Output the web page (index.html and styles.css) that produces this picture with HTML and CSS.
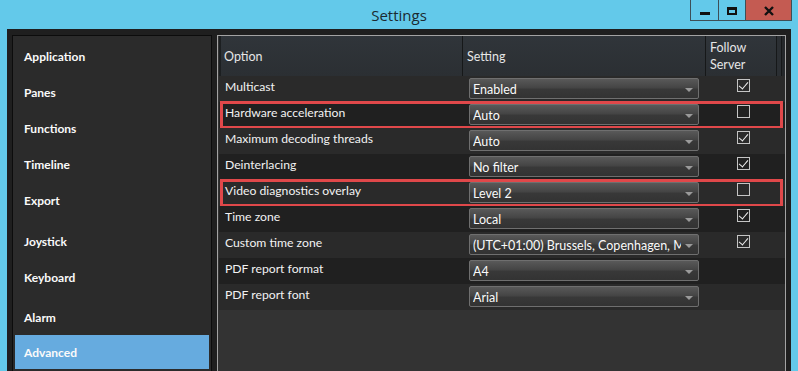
FILE: index.html
```html
<!DOCTYPE html>
<html>
<head>
<meta charset="utf-8">
<link rel="stylesheet" href="styles.css">
</head>
<body>
<div class="window">
  <div class="titlebar">
    <div></div>
    <div class="title">Settings</div>
    <div class="controls">
      <div class="ctl ctl-min"><span class="bar"></span></div>
      <div class="ctl ctl-max"><span class="box"></span></div>
      <div class="ctl ctl-close">
        <svg width="12" height="10" viewBox="0 0 12 10"><path d="M2 1 L10 9 M10 1 L2 9" stroke="#111" stroke-width="2.4" fill="none"/></svg>
      </div>
    </div>
  </div>
  <div class="content">
    <nav class="nav">
      <div class="nav-item">Application</div>
      <div class="nav-item">Panes</div>
      <div class="nav-item">Functions</div>
      <div class="nav-item">Timeline</div>
      <div class="nav-item">Export</div>
      <div class="nav-item gap5">Joystick</div>
      <div class="nav-item">Keyboard</div>
      <div class="nav-item gap4">Alarm</div>
      <div class="nav-item active">Advanced</div>
    </nav>
    <section class="grid-panel">
      <div class="header">
        <div class="hcell first">Option</div>
        <div class="hcell">Setting</div>
        <div class="hcell follow">Follow<br>Server</div>
        <div class="hcell stub"></div>
      </div>
      <div class="row light">
        <div class="opt">Multicast</div>
        <div class="set"><div class="dd"><span class="dd-text">Enabled</span></div></div>
        <div class="fol"><span class="cb checked"></span></div>
      </div>
      <div class="row dark marked">
        <div class="opt">Hardware acceleration</div>
        <div class="set"><div class="dd"><span class="dd-text">Auto</span></div></div>
        <div class="fol"><span class="cb"></span></div>
      </div>
      <div class="row light">
        <div class="opt">Maximum decoding threads</div>
        <div class="set"><div class="dd"><span class="dd-text">Auto</span></div></div>
        <div class="fol"><span class="cb checked"></span></div>
      </div>
      <div class="row dark">
        <div class="opt">Deinterlacing</div>
        <div class="set"><div class="dd"><span class="dd-text">No filter</span></div></div>
        <div class="fol"><span class="cb checked"></span></div>
      </div>
      <div class="row light marked">
        <div class="opt">Video diagnostics overlay</div>
        <div class="set"><div class="dd"><span class="dd-text">Level 2</span></div></div>
        <div class="fol"><span class="cb"></span></div>
      </div>
      <div class="row dark">
        <div class="opt">Time zone</div>
        <div class="set"><div class="dd"><span class="dd-text">Local</span></div></div>
        <div class="fol"><span class="cb checked"></span></div>
      </div>
      <div class="row light">
        <div class="opt">Custom time zone</div>
        <div class="set"><div class="dd"><span class="dd-text">(UTC+01:00) Brussels, Copenhagen, Madrid, Paris</span></div></div>
        <div class="fol"><span class="cb checked"></span></div>
      </div>
      <div class="row dark">
        <div class="opt">PDF report format</div>
        <div class="set"><div class="dd"><span class="dd-text">A4</span></div></div>
        <div class="fol"></div>
      </div>
      <div class="row light">
        <div class="opt">PDF report font</div>
        <div class="set"><div class="dd"><span class="dd-text">Arial</span></div></div>
        <div class="fol"></div>
      </div>
    </section>
  </div>
</div>
</body>
</html>
```

FILE: styles.css
```css
* { box-sizing: border-box; }
html, body { margin: 0; padding: 0; }
body {
  width: 798px;
  height: 371px;
  overflow: hidden;
  background: #63c9ea;
  font-family: "Lato", "Open Sans", sans-serif;
}
.window {
  width: 798px;
  height: 371px;
  display: flex;
  flex-direction: column;
}
.titlebar {
  height: 29px;
  flex: none;
  display: grid;
  grid-template-columns: 1fr auto 1fr;
  align-items: start;
}
.title {
  font-family: "Open Sans", sans-serif;
  font-size: 15px;
  color: #1b2a30;
  line-height: 29px;
  padding-top: 1px;
}
.controls {
  display: flex;
  justify-content: flex-end;
  margin-right: 6px;
}
.ctl {
  height: 21px;
  border: 1px solid #3d4f57;
  border-top: none;
  display: flex;
  align-items: center;
  justify-content: center;
}
.ctl + .ctl { border-left: none; }
.ctl-min { width: 29px; }
.ctl-max { width: 27px; }
.ctl-close { width: 46px; background: #c45b52; }
.ctl-min .bar {
  width: 10px; height: 3px; background: #111; margin-top: 7px;
}
.ctl-max .box {
  width: 10px; height: 8px; border: 2px solid #111; border-top-width: 3px; margin-top: 1px;
}
.ctl-close svg { margin-top: 1px; }

.content {
  flex: 1;
  margin: 0 7px;
  background: #1f1f1f;
  display: flex;
  gap: 5px;
  padding: 6px 5px 0 5px;
  min-height: 0;
}
.nav {
  width: 200px;
  flex: none;
  background: #2b2b2b;
  border: 1px solid #0c0c0c;
  border-bottom: none;
  padding: 2px 2px 0 2px;
  display: flex;
  flex-direction: column;
}
.nav-item {
  height: 36px;
  flex: none;
  display: flex;
  align-items: center;
  padding-left: 9px;
  color: #fafafa;
  font-weight: 700;
  font-size: 12px;
}
.nav-item.gap5 { margin-top: 5px; }
.nav-item.gap4 { margin-top: 4px; }
.nav-item.active {
  background: #66abdf;
  height: 34px;
}

.grid-panel {
  flex: 1;
  background: #333333;
  border: 1px solid #a3a3a3;
  border-bottom: none;
  padding: 0 0 0 1px;
  display: flex;
  flex-direction: column;
}
.header, .row {
  display: grid;
  grid-template-columns: 244px 243px 71px 1fr;
}
.header {
  height: 40px;
  background: linear-gradient(#30353a, #2b2f33);
  color: #e6e6e6;
  font-size: 12.5px;
}
.hcell {
  border-right: 1px solid #161819;
  display: flex;
  align-items: center;
  padding-left: 4px;
}
.hcell.first {
  border-left: 2px solid #1c1f21;
  padding-left: 3px;
}
.hcell.follow {
  line-height: 17px;
  align-items: flex-start;
  padding-top: 3px;
}
.hcell.stub {
  border-right: none;
  background: linear-gradient(90deg, #2b2f33 0 4px, #161819 4px 5px, #25282b 5px);
}
.row {
  height: 26px;
  position: relative;
  color: #f2f2f2;
  font-size: 12.2px;
}
.row.light { background: #2a2a2a; }
.row.dark { background: #202020; }
.row.marked::after {
  content: "";
  position: absolute;
  top: -1px; bottom: -1px; left: 1px; right: 2px;
  border: 3px solid #e0484a;
  pointer-events: none;
}
.opt {
  padding-left: 6px;
  line-height: 22px;
  white-space: nowrap;
}
.set {
  padding: 2px 0 0 6px;
}
.dd {
  position: relative;
  width: 230px;
  height: 21px;
  border: 1px solid #6f6f6f;
  border-radius: 2px;
  background: linear-gradient(#595959, #454545 45%, #383838 55%, #333333);
  color: #fafafa;
  font-size: 12.5px;
  line-height: 21px;
  padding: 0 0 0 3px;
}
.dd-text {
  display: block;
  width: 208px;
  white-space: nowrap;
  overflow: hidden;
}
.dd::after {
  content: "";
  position: absolute;
  right: 5px;
  top: 9px;
  border-left: 4px solid transparent;
  border-right: 4px solid transparent;
  border-top: 4px solid #9a9a9a;
}
.fol {
  padding: 3px 0 0 31px;
}
.cb {
  display: block;
  width: 13px;
  height: 13px;
  border: 1px solid #c4c4c4;
  position: relative;
}
.cb.checked::after {
  content: "";
  position: absolute;
  left: 3px;
  top: 0px;
  width: 4px;
  height: 8px;
  border-right: 1.5px solid #f0f0f0;
  border-bottom: 1.5px solid #f0f0f0;
  transform: rotate(40deg);
}
```
